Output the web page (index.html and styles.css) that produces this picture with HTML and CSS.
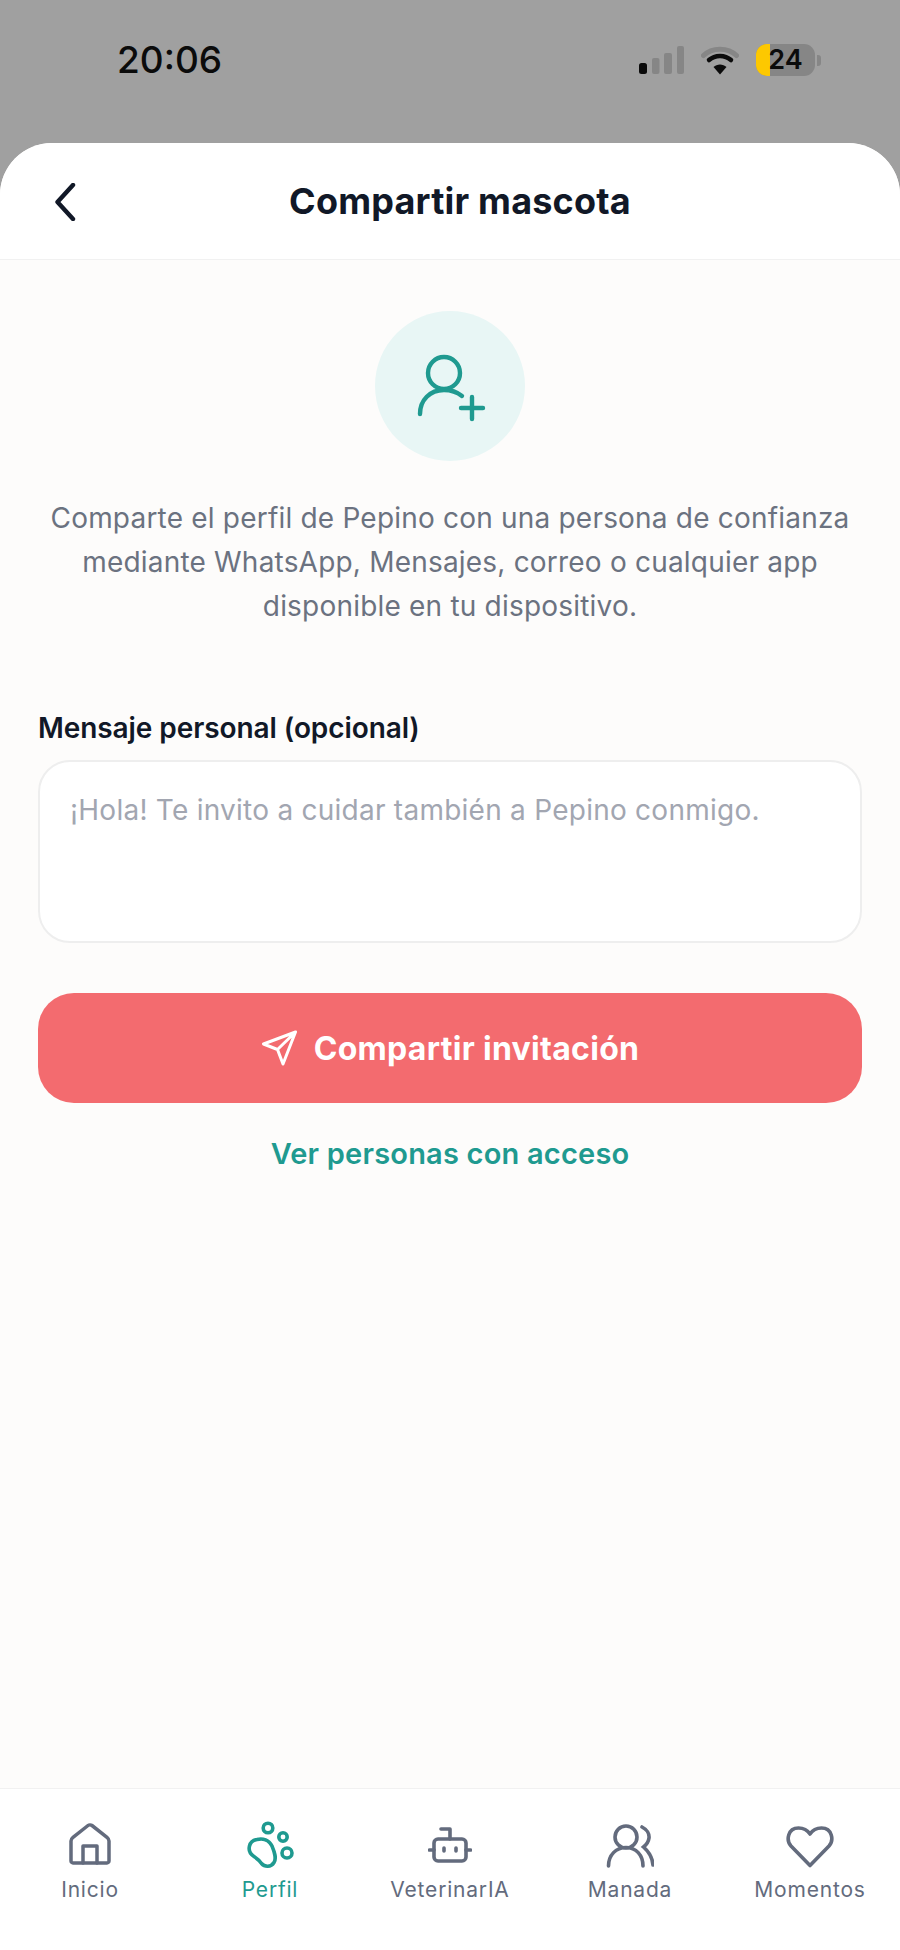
FILE: index.html
```html
<!DOCTYPE html>
<html lang="es">
<head>
<meta charset="utf-8">
<title>Compartir mascota</title>
<link rel="stylesheet" href="styles.css">
</head>
<body>
<div class="phone">
  <div class="status">
    <span class="time">20:06</span>
    <div class="status-icons">
      <svg class="signal" width="45" height="28" viewBox="0 0 45 28">
        <rect x="0" y="17" width="8" height="11" rx="2.5" fill="#0b0b0b"/>
        <rect x="13" y="12" width="7.500" height="16" rx="2" fill="#868686"/>
        <rect x="25" y="7" width="8" height="21" rx="2" fill="#868686"/>
        <rect x="38" y="0" width="7" height="28" rx="2" fill="#868686"/>
      </svg>
      <svg class="wifi" width="38" height="29" viewBox="0 0 38 29">
        <path d="M2.500 9.500 C11 1 27 1 35.500 9.500" fill="none" stroke="#868686" stroke-width="5" stroke-linecap="round"/>
        <path d="M8 14 C14 8.500 24 8.500 30 14" fill="none" stroke="#0b0b0b" stroke-width="4.500" stroke-linecap="round"/>
        <path d="M19 28.500 L12.500 21 C16 17.500 22 17.500 25.500 21 Z" fill="#0b0b0b"/>
      </svg>
      <div class="battery">
        <div class="battery-body"><div class="battery-fill"></div><span class="battery-num">24</span></div>
        <div class="battery-cap"></div>
      </div>
    </div>
  </div>

  <div class="sheet">
    <header class="header">
      <svg class="back" width="24" height="38" viewBox="0 0 24 38">
        <path d="M21 2 L5.500 19 L21 36" fill="none" stroke="#111827" stroke-width="4.400" stroke-linecap="round" stroke-linejoin="round"/>
      </svg>
      <h1 class="title">Compartir mascota</h1>
    </header>

    <main class="content">
      <div class="hero">
        <svg width="72" height="72" viewBox="0 0 72 72">
          <g fill="none" stroke="#1f9a90" stroke-width="4.400" stroke-linecap="round">
            <circle cx="30" cy="23" r="16"/>
            <path d="M6 64 C6 50 16 40 30 40 C38 40 43 42 48 46"/>
            <path d="M58 47 V69 M47 58 H69"/>
          </g>
        </svg>
      </div>
      <p class="intro">Comparte el perfil de Pepino con una persona de confianza mediante WhatsApp, Mensajes, correo o cualquier app disponible en tu dispositivo.</p>
      <label class="label" for="msg">Mensaje personal (opcional)</label>
      <textarea class="input" id="msg" placeholder="¡Hola! Te invito a cuidar también a Pepino conmigo."></textarea>
      <button class="cta" type="button">
        <svg width="36" height="36" viewBox="0 0 36 36">
          <path d="M34.500 2 L2.500 14 L16.500 19.500 L22 34 Z M34.500 2 L16.500 19.500" fill="none" stroke="#fff" stroke-width="3" stroke-linejoin="round" stroke-linecap="round"/>
        </svg>
        Compartir invitación
      </button>
      <a class="link">Ver personas con acceso</a>
    </main>

    <nav class="nav">
      <div class="tab">
        <svg width="44" height="44" viewBox="0 0 44 44">
          <g fill="none" stroke="#636b7d" stroke-width="3.500" stroke-linejoin="round" stroke-linecap="round">
            <path d="M5 40 H39 C40 40 41 39 41 38 V18 C41 16.500 40.500 15.500 39 14.300 L24 2.500 C23 1.700 21 1.700 20 2.500 L5 14.300 C3.500 15.500 3 16.500 3 18 V38 C3 39 4 40 5 40 Z"/>
            <path d="M15 40 V23 H29 V40"/>
          </g>
        </svg>
        <span class="tab-label">Inicio</span>
      </div>
      <div class="tab active">
        <svg width="48" height="48" viewBox="0 0 48 48">
          <g fill="none" stroke="#1f9a90" stroke-width="3.600" stroke-linecap="round" stroke-linejoin="round">
            <circle cx="22" cy="7" r="4.800"/>
            <circle cx="37" cy="16" r="4.200"/>
            <circle cx="41" cy="32" r="5"/>
            <path d="M11 18.500 C17 17 23 19 26 25 C28 30 31 37 28 41.500 C25 46.500 18.500 46 15.500 42.500 C13 39 11 37.500 8 35.500 C4 33 2.500 29 3.500 25 C4.500 21 8 19 11 18.500 Z"/>
          </g>
        </svg>
        <span class="tab-label">Perfil</span>
      </div>
      <div class="tab">
        <svg width="44" height="44" viewBox="0 0 44 44">
          <g fill="none" stroke="#636b7d" stroke-width="3.600" stroke-linecap="round" stroke-linejoin="round">
            <rect x="6" y="16" width="32" height="22" rx="4"/>
            <path d="M22 16 V6 H13"/>
            <path d="M1.500 27 H6 M38 27 H42.500"/>
            <path d="M16 25 V28 M28 25 V28"/>
          </g>
        </svg>
        <span class="tab-label">VeterinarIA</span>
      </div>
      <div class="tab">
        <svg width="48" height="44" viewBox="0 0 48 44">
          <g fill="none" stroke="#636b7d" stroke-width="3.600" stroke-linecap="round">
            <circle cx="20" cy="14" r="11"/>
            <path d="M2.500 43 C2.500 32 10 24.500 20 24.500 C30 24.500 37 32 37 43"/>
            <path d="M36 4 C41 6.500 43.500 11 43 15 C42.500 19 40 22 37.500 24 C42 28 46.500 35 47 42"/>
          </g>
        </svg>
        <span class="tab-label">Manada</span>
      </div>
      <div class="tab">
        <svg width="50" height="44" viewBox="0 0 50 44">
          <path d="M25 42.500 L6 23 C1 17.500 2.500 5 13.500 5 C19 5 23 8 25 11 C27 8 31 5 36.500 5 C47.500 5 49 17.500 44 23 Z" fill="none" stroke="#636b7d" stroke-width="3.600" stroke-linejoin="round"/>
        </svg>
        <span class="tab-label">Momentos</span>
      </div>
    </nav>
  </div>
</div>
</body>
</html>
```

FILE: styles.css
```css
* { box-sizing: border-box; }
html, body { margin: 0; padding: 0; }
body { font-family: Inter, "Liberation Sans", sans-serif; background: #a0a0a0; }

.phone { width: 900px; height: 1950px; display: flex; flex-direction: column; background: #a0a0a0; overflow: hidden; }

.status { height: 143px; flex: none; display: flex; justify-content: space-between; align-items: center; padding: 0 79px 23px 117px; }
.time { font-size: 37px; font-weight: 500; line-height: 40px; color: #0b0b0b; }
.status-icons { display: flex; align-items: center; gap: 17px; }
.battery { display: flex; align-items: center; gap: 2px; }
.battery-body { position: relative; width: 59px; height: 32px; border-radius: 11px; background: #868686; overflow: hidden; display: flex; align-items: center; justify-content: center; }
.battery-fill { position: absolute; left: 0; top: 0; bottom: 0; width: 14px; background: #fdc800; }
.battery-num { position: relative; font-weight: 600; font-size: 27px; line-height: 32px; color: #0b0b0b; }
.battery-cap { width: 4px; height: 11px; border-radius: 0 3px 3px 0; background: #868686; }

.sheet { flex: 1; min-height: 0; display: flex; flex-direction: column; background: #fdfcfb; border-radius: 52px 52px 0 0; overflow: hidden; }

.header { position: relative; height: 117px; flex: none; display: flex; align-items: center; justify-content: center; padding-left: 20px; background: #fff; border-bottom: 1px solid #f1f1f1; }
.back { position: absolute; left: 52px; top: 40px; }
.title { margin: 0; font-size: 36px; font-weight: 700; letter-spacing: 0.2px; color: #111827; }

.content { flex: 1; min-height: 0; display: flex; flex-direction: column; align-items: center; padding: 51px 38px 0; }
.hero { width: 150px; height: 150px; flex: none; border-radius: 50%; background: #e8f6f5; display: flex; align-items: center; justify-content: center; }
.intro { margin: 35px 0 0; width: 824px; text-align: center; font-size: 28px; line-height: 44px; letter-spacing: 0.2px; color: #6b7280; }
.label { align-self: stretch; margin-top: 83px; font-size: 28px; line-height: 34px; font-weight: 600; letter-spacing: -0.08px; color: #111827; }
.input { display: block; width: 824px; height: 183px; flex: none; margin-top: 15px; padding: 30px 30px; border: 2px solid #eeeeee; border-radius: 32px; background: #fff; resize: none; outline: none; font-family: inherit; font-size: 28px; line-height: 36px; letter-spacing: 0.25px; color: #111827; }
.input::placeholder { color: #a2a6b1; opacity: 1; }
.cta { width: 824px; height: 110px; flex: none; margin-top: 50px; border: 0; border-radius: 36px; background: #f36b6f; color: #fff; font-family: inherit; font-size: 32px; font-weight: 700; letter-spacing: 0.3px; display: flex; align-items: center; justify-content: center; gap: 17px; }
.link { margin-top: 32px; font-size: 29px; line-height: 38px; font-weight: 600; letter-spacing: 0.2px; color: #1f9a90; }

.nav { height: 162px; flex: none; display: flex; background: #fff; border-top: 1px solid #f1f1f1; padding-top: 32px; }
.tab { width: 180px; display: flex; flex-direction: column; align-items: center; color: #636b7d; }
.tab svg { height: 48px; display: block; }
.tab-label { margin-top: 6px; font-size: 21px; font-weight: 400; line-height: 30px; letter-spacing: 0.8px; }
.tab.active { color: #1f9a90; }
```
